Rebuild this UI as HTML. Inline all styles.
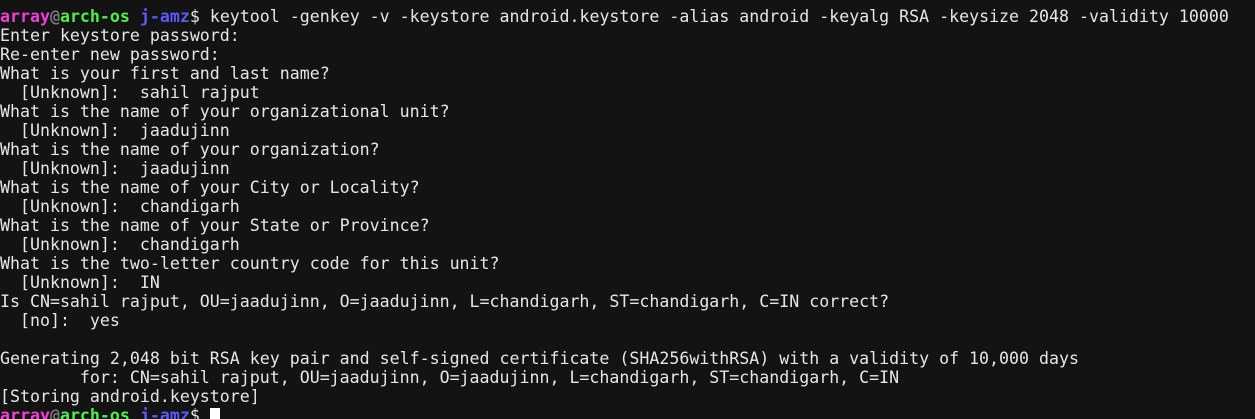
<!DOCTYPE html><html><head><style>
html,body{margin:0;padding:0;background:#131313;width:1255px;height:419px;overflow:hidden}
pre{margin:0;padding:7px 0 0 0;font-family:"DejaVu Sans Mono","Liberation Mono",monospace;font-size:16.6px;line-height:19px;color:#e6e6e6;white-space:pre}
.m{color:#f03fd8;font-weight:bold}.g{color:#777;font-weight:bold}.n{color:#4af04a;font-weight:bold}.b{color:#5a5af5;font-weight:bold}
.c{display:inline-block;width:10px;height:16px;background:#fff;vertical-align:-3px}
</style></head><body><pre><span class="m">array</span><span class="g">@</span><span class="n">arch-os</span> <span class="b">j-amz</span>$ keytool -genkey -v -keystore android.keystore -alias android -keyalg RSA -keysize 2048 -validity 10000
Enter keystore password:
Re-enter new password:
What is your first and last name?
  [Unknown]:  sahil rajput
What is the name of your organizational unit?
  [Unknown]:  jaadujinn
What is the name of your organization?
  [Unknown]:  jaadujinn
What is the name of your City or Locality?
  [Unknown]:  chandigarh
What is the name of your State or Province?
  [Unknown]:  chandigarh
What is the two-letter country code for this unit?
  [Unknown]:  IN
Is CN=sahil rajput, OU=jaadujinn, O=jaadujinn, L=chandigarh, ST=chandigarh, C=IN correct?
  [no]:  yes

Generating 2,048 bit RSA key pair and self-signed certificate (SHA256withRSA) with a validity of 10,000 days
        for: CN=sahil rajput, OU=jaadujinn, O=jaadujinn, L=chandigarh, ST=chandigarh, C=IN
[Storing android.keystore]
<span class="m">array</span><span class="g">@</span><span class="n">arch-os</span> <span class="b">j-amz</span>$ <span class="c"></span></pre></body></html>
